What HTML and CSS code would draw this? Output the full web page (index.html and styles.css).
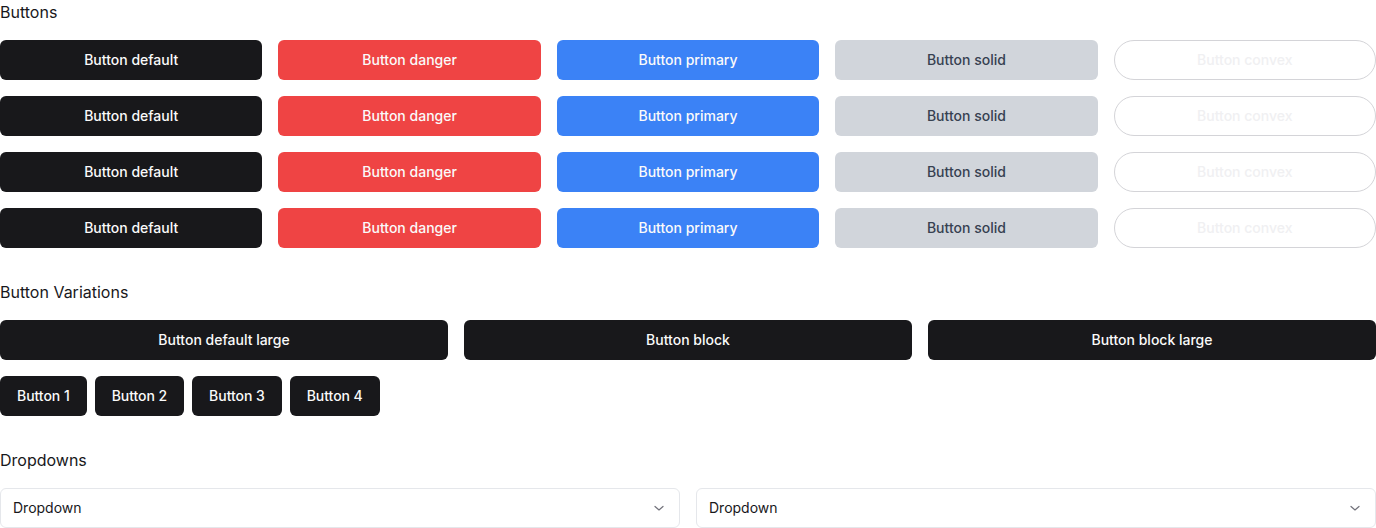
FILE: index.html
```html
<!DOCTYPE html>
<html>
<head>
<meta charset="utf-8">
<link rel="stylesheet" href="styles.css">
</head>
<body>
<section class="section">
  <h2 class="title">Buttons</h2>
  <div class="grid5">
    <button class="btn btn-default">Button default</button>
    <button class="btn btn-danger">Button danger</button>
    <button class="btn btn-primary">Button primary</button>
    <button class="btn btn-solid">Button solid</button>
    <button class="btn btn-convex">Button convex</button>
    <button class="btn btn-default">Button default</button>
    <button class="btn btn-danger">Button danger</button>
    <button class="btn btn-primary">Button primary</button>
    <button class="btn btn-solid">Button solid</button>
    <button class="btn btn-convex">Button convex</button>
    <button class="btn btn-default">Button default</button>
    <button class="btn btn-danger">Button danger</button>
    <button class="btn btn-primary">Button primary</button>
    <button class="btn btn-solid">Button solid</button>
    <button class="btn btn-convex">Button convex</button>
    <button class="btn btn-default">Button default</button>
    <button class="btn btn-danger">Button danger</button>
    <button class="btn btn-primary">Button primary</button>
    <button class="btn btn-solid">Button solid</button>
    <button class="btn btn-convex">Button convex</button>
  </div>
</section>
<section class="section">
  <h2 class="title">Button Variations</h2>
  <div class="grid3">
    <button class="btn btn-default">Button default large</button>
    <button class="btn btn-default">Button block</button>
    <button class="btn btn-default">Button block large</button>
  </div>
  <div class="group">
    <button class="btn btn-default btn-inline">Button 1</button>
    <button class="btn btn-default btn-inline">Button 2</button>
    <button class="btn btn-default btn-inline">Button 3</button>
    <button class="btn btn-default btn-inline">Button 4</button>
  </div>
</section>
<section class="section">
  <h2 class="title">Dropdowns</h2>
  <div class="grid2">
    <div class="dropdown"><span class="dd-label">Dropdown</span>
      <svg class="chev" width="12" height="12" viewBox="0 0 12 12"><path d="M2 4.5 L6 8 L10 4.5" fill="none" stroke="#71717a" stroke-width="1.2" stroke-linecap="round" stroke-linejoin="round"/></svg>
    </div>
    <div class="dropdown"><span class="dd-label">Dropdown</span>
      <svg class="chev" width="12" height="12" viewBox="0 0 12 12"><path d="M2 4.5 L6 8 L10 4.5" fill="none" stroke="#71717a" stroke-width="1.2" stroke-linecap="round" stroke-linejoin="round"/></svg>
    </div>
  </div>
</section>
</body>
</html>
```
FILE: styles.css
```css
* { box-sizing: border-box; }
html, body { margin: 0; padding: 0; background: #fff; }
body {
  font-family: Inter, "Noto Sans", sans-serif;
  color: #18181b;
  width: 1376px;
}
.section { margin-bottom: 32px; }
.section:last-child { margin-bottom: 0; }
.title {
  margin: 0 0 16px 0;
  font-size: 16px;
  line-height: 24px;
  font-weight: 400;
  color: #18181b;
}
.grid5 {
  display: grid;
  grid-template-columns: repeat(5, 1fr);
  gap: 16px;
}
.grid3 {
  display: grid;
  grid-template-columns: repeat(3, 1fr);
  gap: 16px;
}
.grid2 {
  display: grid;
  grid-template-columns: repeat(2, 1fr);
  gap: 16px;
}
.group {
  display: flex;
  gap: 8px;
  margin-top: 16px;
}
.btn {
  height: 40px;
  border: 1px solid transparent;
  border-radius: 6px;
  font-family: Inter, "Noto Sans", sans-serif;
  font-size: 14px;
  font-weight: 500;
  line-height: 20px;
  padding: 0 16px;
  margin: 0;
  cursor: pointer;
}
.btn-default { background: #18181b; color: #fafafa; }
.btn-danger { background: #ef4444; color: #fafafa; }
.btn-primary { background: #3b82f6; color: #fafafa; }
.btn-solid { background: #d1d5db; color: #374151; }
.btn-convex {
  background: #fff;
  border-color: #d4d4d8;
  border-radius: 9999px;
  color: #f0f0f2;
}
.btn-inline { padding: 0 16px; letter-spacing: -0.05px; }
.dropdown {
  height: 40px;
  border: 1px solid #e5e7eb;
  border-radius: 6px;
  display: flex;
  align-items: center;
  justify-content: space-between;
  padding: 0 14px 0 12px;
  font-size: 14px;
  line-height: 20px;
  color: #18181b;
}
.dd-label { display: block; line-height: 20px; margin-top: -1px; }
.chev { display: block; }
```
